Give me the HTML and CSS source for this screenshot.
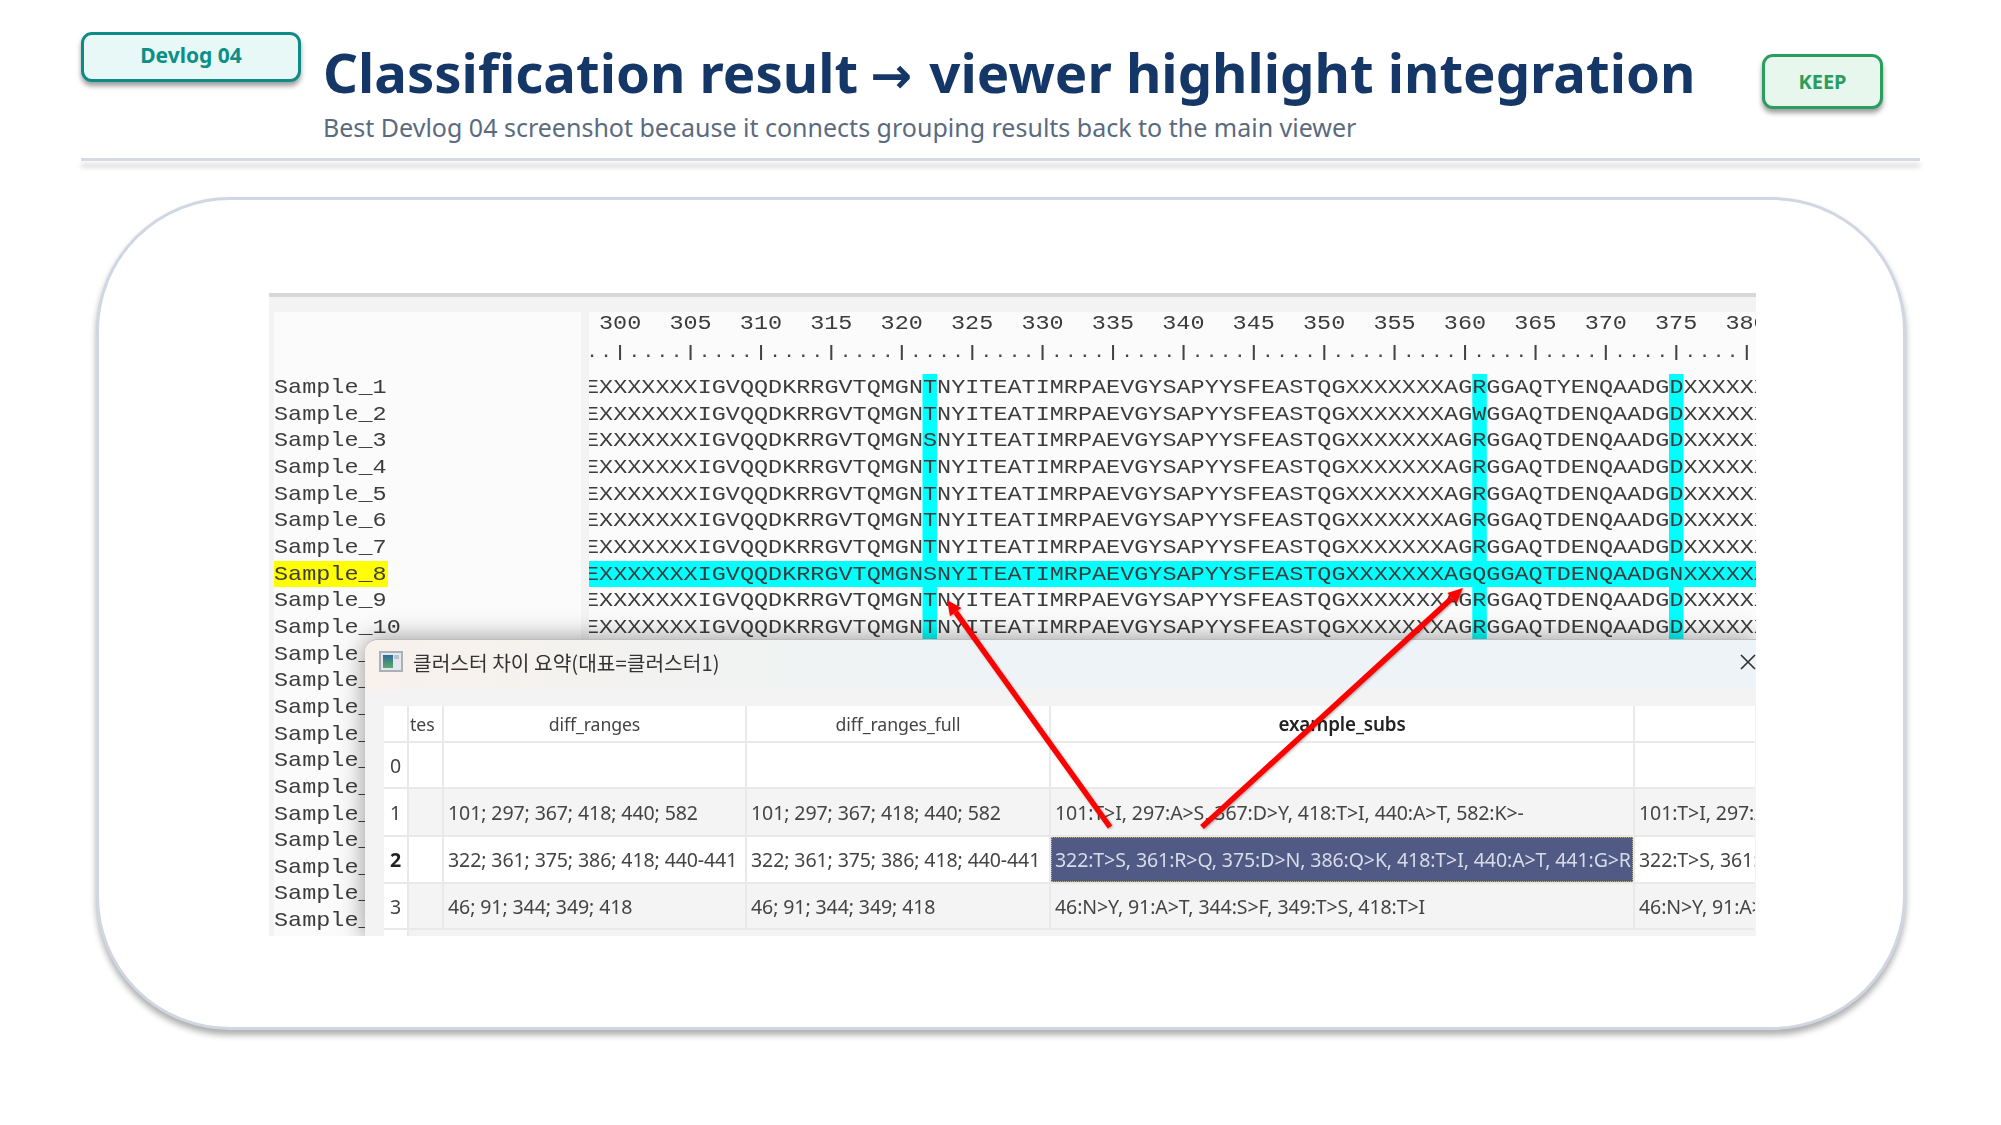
FILE: index.html
```html
<!DOCTYPE html>
<html lang="en">
<head>
<meta charset="utf-8">
<title>Devlog 04</title>
<link rel="stylesheet" href="styles.css">
</head>
<body>
<main class="slide">
  <header class="head">
    <div class="badge badge-devlog">Devlog 04</div>
    <div class="titles">
      <h1 class="title">Classification result <span class="title-arrow">→</span> viewer highlight integration</h1>
      <p class="subtitle">Best Devlog 04 screenshot because it connects grouping results back to the main viewer</p>
    </div>
    <div class="badge badge-keep">KEEP</div>
  </header>
  <div class="rule"></div>
  <section class="card">
    <div class="shot">
      <div class="viewer">
        <div class="names">
          <div class="row">Sample_1</div><div class="row">Sample_2</div><div class="row">Sample_3</div>
          <div class="row">Sample_4</div><div class="row">Sample_5</div><div class="row">Sample_6</div>
          <div class="row">Sample_7</div><div class="row"><span class="name-hit">Sample_8</span></div><div class="row">Sample_9</div>
          <div class="row">Sample_10</div><div class="row">Sample_11</div><div class="row">Sample_12</div>
          <div class="row">Sample_13</div><div class="row">Sample_14</div><div class="row">Sample_15</div>
          <div class="row">Sample_16</div><div class="row">Sample_17</div><div class="row">Sample_18</div>
          <div class="row">Sample_19</div><div class="row">Sample_20</div><div class="row">Sample_21</div>
        </div>
        <div class="seqs">
          <div class="ruler"><span>300</span><span>305</span><span>310</span><span>315</span><span>320</span><span>325</span><span>330</span><span>335</span><span>340</span><span>345</span><span>350</span><span>355</span><span>360</span><span>365</span><span>370</span><span>375</span><span>380</span></div>
          <div class="ticks">..|....|....|....|....|....|....|....|....|....|....|....|....|....|....|....|....|</div>
          <div class="row">EXXXXXXXIGVQQDKRRGVTQMGN<mark>T</mark>NYITEATIMRPAEVGYSAPYYSFEASTQGXXXXXXXAG<mark>R</mark>GGAQTYENQAADG<mark>D</mark>XXXXXX</div>
          <div class="row">EXXXXXXXIGVQQDKRRGVTQMGN<mark>T</mark>NYITEATIMRPAEVGYSAPYYSFEASTQGXXXXXXXAG<mark>W</mark>GGAQTDENQAADG<mark>D</mark>XXXXXX</div>
          <div class="row">EXXXXXXXIGVQQDKRRGVTQMGN<mark>S</mark>NYITEATIMRPAEVGYSAPYYSFEASTQGXXXXXXXAG<mark>R</mark>GGAQTDENQAADG<mark>D</mark>XXXXXX</div>
          <div class="row">EXXXXXXXIGVQQDKRRGVTQMGN<mark>T</mark>NYITEATIMRPAEVGYSAPYYSFEASTQGXXXXXXXAG<mark>R</mark>GGAQTDENQAADG<mark>D</mark>XXXXXX</div>
          <div class="row">EXXXXXXXIGVQQDKRRGVTQMGN<mark>T</mark>NYITEATIMRPAEVGYSAPYYSFEASTQGXXXXXXXAG<mark>R</mark>GGAQTDENQAADG<mark>D</mark>XXXXXX</div>
          <div class="row">EXXXXXXXIGVQQDKRRGVTQMGN<mark>T</mark>NYITEATIMRPAEVGYSAPYYSFEASTQGXXXXXXXAG<mark>R</mark>GGAQTDENQAADG<mark>D</mark>XXXXXX</div>
          <div class="row">EXXXXXXXIGVQQDKRRGVTQMGN<mark>T</mark>NYITEATIMRPAEVGYSAPYYSFEASTQGXXXXXXXAG<mark>R</mark>GGAQTDENQAADG<mark>D</mark>XXXXXX</div>
          <div class="row-band"><div class="row">EXXXXXXXIGVQQDKRRGVTQMGNSNYITEATIMRPAEVGYSAPYYSFEASTQGXXXXXXXAGQGGAQTDENQAADGNXXXXXX</div></div>
          <div class="row">EXXXXXXXIGVQQDKRRGVTQMGN<mark>T</mark>NYITEATIMRPAEVGYSAPYYSFEASTQGXXXXXXXAG<mark>R</mark>GGAQTDENQAADG<mark>D</mark>XXXXXX</div>
          <div class="row">EXXXXXXXIGVQQDKRRGVTQMGN<mark>T</mark>NYITEATIMRPAEVGYSAPYYSFEASTQGXXXXXXXAG<mark>R</mark>GGAQTDENQAADG<mark>D</mark>XXXXXX</div>
        </div>
      </div>
      <div class="dialog">
        <div class="dialog-bar">
          <svg class="win-icon" viewBox="0 0 24 21" aria-hidden="true">
            <defs><linearGradient id="wg" x1="0" y1="0" x2="0" y2="1"><stop offset="0" stop-color="#2c6c98"/><stop offset="1" stop-color="#5fa86c"/></linearGradient></defs>
            <rect x="1" y="1" width="22" height="19" fill="#e2e9ee" stroke="#aab0b5" stroke-width="2"/>
            <rect x="4" y="4" width="10" height="13" fill="url(#wg)"/>
            <rect x="15" y="4" width="5" height="4" fill="#b9c2c8"/>
          </svg>
          <span class="dialog-title">클러스터 차이 요약(대표=클러스터1)</span>
          <svg class="close" viewBox="0 0 16 16" aria-hidden="true"><path d="M1 1L15 15M15 1L1 15" stroke="#333" stroke-width="1.7" fill="none"/></svg>
        </div>
        <div class="grid">
          <div class="c rh"></div><div class="c hd hd-tes">tes</div><div class="c hd">diff_ranges</div><div class="c hd">diff_ranges_full</div><div class="c hd hd-b">example_subs</div><div class="c hd"></div>
          <div class="c rh">0</div><div class="c"></div><div class="c"></div><div class="c"></div><div class="c"></div><div class="c"></div>
          <div class="c rh">1</div><div class="c alt"></div><div class="c alt">101; 297; 367; 418; 440; 582</div><div class="c alt">101; 297; 367; 418; 440; 582</div><div class="c alt">101:T&gt;I, 297:A&gt;S, 367:D&gt;Y, 418:T&gt;I, 440:A&gt;T, 582:K&gt;-</div><div class="c alt">101:T&gt;I, 297:A&gt;S</div>
          <div class="c rh rh-b">2</div><div class="c"></div><div class="c">322; 361; 375; 386; 418; 440-441</div><div class="c">322; 361; 375; 386; 418; 440-441</div><div class="c sel">322:T&gt;S, 361:R&gt;Q, 375:D&gt;N, 386:Q&gt;K, 418:T&gt;I, 440:A&gt;T, 441:G&gt;R</div><div class="c">322:T&gt;S, 361:R&gt;Q</div>
          <div class="c rh">3</div><div class="c alt"></div><div class="c alt">46; 91; 344; 349; 418</div><div class="c alt">46; 91; 344; 349; 418</div><div class="c alt">46:N&gt;Y, 91:A&gt;T, 344:S&gt;F, 349:T&gt;S, 418:T&gt;I</div><div class="c alt">46:N&gt;Y, 91:A&gt;T</div>
          <div class="c rh"></div><div class="c tail"></div>
        </div>
      </div>
      <svg class="arrows" viewBox="0 0 1487 643" aria-hidden="true">
        <path class="arrow-line" d="M841 534L686.7 319.2"/>
        <path class="arrow-head" d="M678 307L692.4 315.1L681 323.3Z"/>
        <path class="arrow-line" d="M933 534L1183 305.1"/>
        <path class="arrow-head" d="M1194 295L1187.7 310.3L1178.3 299.9Z"/>
      </svg>
    </div>
  </section>
</main>
</body>
</html>
```

FILE: styles.css
```css
* { box-sizing: border-box; }
html, body { margin: 0; padding: 0; background: #fff; }
.slide { width: 2001px; height: 1125px; padding: 32px 81px 0; overflow: hidden; font-family: "Noto Sans", sans-serif; }

.head { display: flex; align-items: flex-start; height: 126px; padding-right: 37px; }
.badge { display: flex; align-items: center; justify-content: center; border-radius: 11px; border: 3px solid; font-weight: 700; flex: none; box-shadow: 0 4px 5px rgba(0,0,0,.38); }
.badge-devlog { width: 220px; height: 50px; border-color: #0f8b86; background: #e8f8f6; color: #0d8f88; font-size: 21px; padding-bottom: 4px; }
.badge-keep { width: 121px; height: 55px; margin-top: 22px; border-color: #2a9d5f; background: #e8f7ee; color: #2a9d5f; font-size: 20px; }
.titles { flex: 1; margin-left: 22px; }
.title { margin: 4px 0 0; font-size: 54.5px; line-height: 73px; font-weight: 700; color: #153768; white-space: nowrap; }
.title-arrow { font-family: "DejaVu Sans", sans-serif; font-size: 50px; line-height: 1; margin: 0 3px 0 -2px; }
.subtitle { margin: 0; font-size: 25px; line-height: 36px; color: #5b6b7f; white-space: nowrap; }

.rule { height: 3px; background: #d6dbe3; box-shadow: 0 6px 5px rgba(0,0,0,.2); }

.card { width: 1810px; height: 833px; margin: 36px 0 0 15px; padding: 93px 147px 0 170px; border: 3px solid #d0d7e2; border-radius: 134px; background: #fff; box-shadow: 0 5px 6px rgba(0,0,0,.32); }

.shot { position: relative; width: 1487px; height: 643px; overflow: hidden; background: #f3f3f3; border-top: 4px solid #d8d8d8; filter: blur(.45px); }
.viewer { display: flex; gap: 8px; padding: 15px 0 0 5px; height: 100%; }
.names { width: 307px; flex: none; background: #fbfbfb; padding-top: 62px; }
.seqs { flex: 1; min-width: 0; background: #fbfbfb; overflow: hidden; }
.row, .ruler { font-family: "Liberation Mono", monospace; font-size: 21px; white-space: pre; color: #3c3c3c; transform: scaleX(1.1175); transform-origin: left center; }
.row { line-height: 27.4px; height: 26.67px; }
.seqs .row { margin-left: -3.6px; width: 1100px; }
.name-hit { display: inline-block; height: 26.67px; line-height: 27.4px; vertical-align: top; background: #ffff00; padding-right: 1px; }
mark { display: inline-block; height: 26.67px; vertical-align: top; background: #00ffff; color: inherit; }
.row-band { height: 26.67px; background: #00ffff; }
.ruler { display: flex; height: 30px; line-height: 23px; margin-left: 10px; width: 1100px; }
.ruler span { width: 63px; flex: none; }
.ticks { height: 32px; margin-left: -1.8px; font-family: "Liberation Mono", monospace; font-size: 16px; font-weight: 700; letter-spacing: 4.48px; line-height: 22px; white-space: pre; color: #444; }

.dialog { position: absolute; left: 96px; top: 342px; width: 1391px; height: 300px; background: #f3f3f3; border-top: 1px solid #bdbdbd; border-top-left-radius: 13px; box-shadow: 0 0 26px rgba(0,0,0,.42); overflow: hidden; }
.dialog-bar { display: flex; align-items: center; height: 49px; padding: 0 0 6px 14px; background: linear-gradient(90deg, #f8f1ec 0, #f2f2f0 20%, #edf3f6 45%, #edf3f6 100%); }
.win-icon { width: 24px; height: 21px; flex: none; }
.dialog-title { margin-left: 10px; font-family: "Noto Sans CJK KR", "Noto Sans", sans-serif; font-size: 20.3px; color: #333; white-space: nowrap; }
.close { width: 16px; height: 16px; margin-left: auto; flex: none; }

.grid { display: grid; grid-template-columns: 23px 33px 301px 302px 582px 120px; grid-template-rows: 35px 44px 46px 45px 44px 8px; gap: 2px; margin: 17px 0 0 19px; width: 1370px; background: #e9e9e9; font-size: 19.55px; color: #444; }
.c { background: #fff; padding-left: 4px; white-space: nowrap; overflow: hidden; display: flex; align-items: center; letter-spacing: -.1px; }
.rh { padding-left: 0; justify-content: center; }
.rh-b { font-weight: 700; color: #222; }
.hd { justify-content: center; padding-left: 0; font-size: 17.7px; }
.hd-tes { justify-content: flex-start; padding-left: 1px; }
.hd-b { font-weight: 600; font-size: 18.8px; color: #222; }
.alt { background: #f4f4f4; }
.tail { background: #f3f3f3; grid-column: 2 / -1; }
.sel { background: #505a85; color: #d8dce8; outline: 1px dotted #b9b27c; outline-offset: -1px; padding-left: 4px; }

.arrows { position: absolute; left: 0; top: -4px; width: 1487px; height: 643px; filter: drop-shadow(1px 1px 1px rgba(0,0,0,.3)); }
.arrow-line { stroke: #fe0000; stroke-width: 5.5px; fill: none; }
.arrow-head { fill: #fe0000; }
```
